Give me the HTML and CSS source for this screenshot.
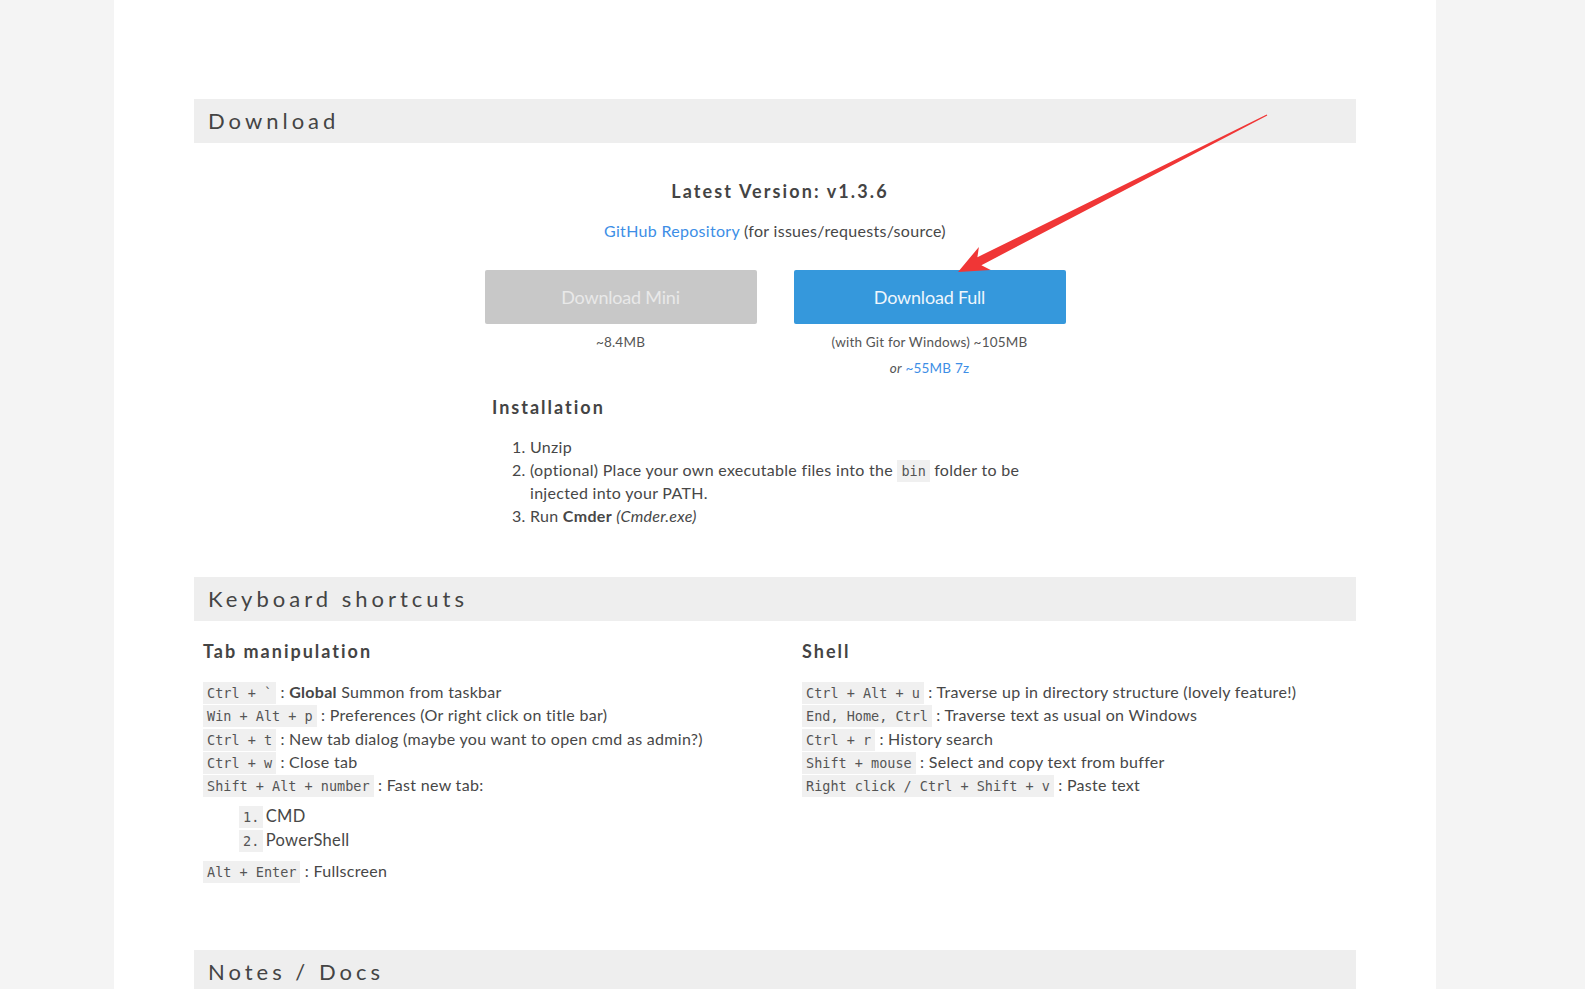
FILE: index.html
```html
<!DOCTYPE html>
<html lang="en">
<head>
<meta charset="utf-8">
<title>Cmder - Download</title>
<link rel="stylesheet" href="styles.css">
</head>
<body>
<div class="page">
  <main class="content">
    <section class="sec sec-download">
      <h2 class="sec-title">Download</h2>
      <div class="dl">
        <h3 class="latest">Latest Version: v1.3.6</h3>
        <p class="repo"><a class="link" href="#">GitHub Repository</a> (for issues/requests/source)</p>
        <div class="buttons">
          <div class="btn-col">
            <a class="btn btn-mini" href="#">Download Mini</a>
            <p class="size">~8.4MB</p>
          </div>
          <div class="btn-col">
            <a class="btn btn-full" href="#">Download Full</a>
            <p class="size">(with Git for Windows) ~105MB</p>
            <p class="size"><em>or</em> <a class="link" href="#">~55MB 7z</a></p>
          </div>
        </div>
        <div class="install">
          <h4 class="sub">Installation</h4>
          <ol class="steps">
            <li>Unzip</li>
            <li>(optional) Place your own executable files into the <code>bin</code> folder to be injected into your PATH.</li>
            <li>Run <strong>Cmder</strong> <em>(Cmder.exe)</em></li>
          </ol>
        </div>
      </div>
    </section>

    <section class="sec sec-keys">
      <h2 class="sec-title">Keyboard shortcuts</h2>
      <div class="cols">
        <div class="col">
          <h4 class="sub">Tab manipulation</h4>
          <ul class="keys">
            <li><code>Ctrl + `</code> : <strong>Global</strong> Summon from taskbar</li>
            <li><code>Win + Alt + p</code> : Preferences (Or right click on title bar)</li>
            <li><code>Ctrl + t</code> : New tab dialog (maybe you want to open cmd as admin?)</li>
            <li><code>Ctrl + w</code> : Close tab</li>
            <li><code>Shift + Alt + number</code> : Fast new tab:
              <ol class="nested">
                <li><code class="num">1.</code> CMD</li>
                <li><code class="num">2.</code> PowerShell</li>
              </ol>
            </li>
            <li><code>Alt + Enter</code> : Fullscreen</li>
          </ul>
        </div>
        <div class="col">
          <h4 class="sub">Shell</h4>
          <ul class="keys">
            <li><code>Ctrl + Alt + u</code> : Traverse up in directory structure (lovely feature!)</li>
            <li><code>End, Home, Ctrl</code> : Traverse text as usual on Windows</li>
            <li><code>Ctrl + r</code> : History search</li>
            <li><code>Shift + mouse</code> : Select and copy text from buffer</li>
            <li><code>Right click / Ctrl + Shift + v</code> : Paste text</li>
          </ul>
        </div>
      </div>
    </section>

    <section class="sec">
      <h2 class="sec-title">Notes / Docs</h2>
    </section>
  </main>

  <svg class="arrow" width="1585" height="1000" viewBox="0 0 1585 1000" aria-hidden="true">
    <polygon fill="#f03636" points="958,272 990.7,270.1 981.4,265.2 1267.3,115.6 1266.7,114.4 977.4,257.2 978.9,246.9"/>
  </svg>
</div>
</body>
</html>
```

FILE: styles.css
```css
html, body {
  margin: 0;
  padding: 0;
  background: #ffffff;
}

body {
  font-family: Lato, "Open Sans", "Liberation Sans", sans-serif;
  color: #474747;
  font-size: 16px;
  letter-spacing: 0.3px;
}

.page {
  position: relative;
  height: 989px;
  overflow: hidden;
  background: #f4f4f4;
}

.content {
  width: 1162px;
  margin-left: 114px;
  padding: 99px 80px 0 80px;
  background: #ffffff;
  min-height: 989px;
  box-sizing: content-box;
}

.sec-download {
  margin-bottom: 50px;
}

.sec-keys {
  margin-bottom: 67px;
}

.sec-title {
  margin: 0;
  height: 44px;
  line-height: 44px;
  padding-left: 14px;
  background: #eeeeee;
  font-size: 22px;
  font-weight: 400;
  letter-spacing: 4px;
  color: #444444;
}

.dl {
  display: flex;
  flex-direction: column;
  align-items: center;
  padding-top: 36px;
}

.latest {
  margin: 0 0 0 10px;
  font-size: 18px;
  line-height: 24px;
  font-weight: 700;
  letter-spacing: 2.1px;
  color: #444444;
}

.repo {
  margin: 17px 0 0 0;
  line-height: 22px;
}

.link {
  color: #3d8ee6;
  text-decoration: none;
}

.buttons {
  display: flex;
  gap: 37px;
  margin-top: 28px;
}

.btn-col {
  display: flex;
  flex-direction: column;
  align-items: center;
  width: 272px;
}

.btn {
  display: flex;
  align-items: center;
  justify-content: center;
  width: 272px;
  height: 54px;
  border-radius: 2px;
  font-size: 18px;
  text-decoration: none;
  letter-spacing: -0.2px;
}

.btn-mini {
  background: #c8c8c8;
  color: #e9e9e9;
}

.btn-full {
  background: #3598dc;
  color: #eef6fc;
}

.size {
  margin: 0;
  font-size: 13.5px;
  letter-spacing: 0.2px;
  line-height: 26px;
  color: #555555;
}

.btn + .size {
  margin-top: 5px;
}

.install {
  width: 566px;
  margin-top: 14px;
}

.sub {
  margin: 0;
  font-size: 18px;
  line-height: 24px;
  font-weight: 700;
  letter-spacing: 2px;
  color: #444444;
}

.steps {
  margin: 16px 0 0 0;
  padding: 0 36px 0 38px;
  line-height: 23px;
}

code {
  font-family: "DejaVu Sans Mono", "Liberation Mono", monospace;
  font-size: 13.5px;
  line-height: 1;
  letter-spacing: 0;
  background: #f0f0f0;
  color: #555555;
  padding: 3px 4px;
}

.cols {
  display: grid;
  grid-template-columns: 1fr 1fr;
  column-gap: 54px;
  padding: 18px 9px 0 9px;
}

.keys {
  list-style: none;
  margin: 17px 0 0 0;
  padding: 0;
  line-height: 23.3px;
}

.nested {
  list-style: none;
  margin: 8px 0 7px 0;
  padding-left: 36px;
  line-height: 24px;
  font-size: 16.5px;
}

.num {
  margin-right: -2px;
}

.arrow {
  position: absolute;
  left: 0;
  top: 0;
  pointer-events: none;
}
```
